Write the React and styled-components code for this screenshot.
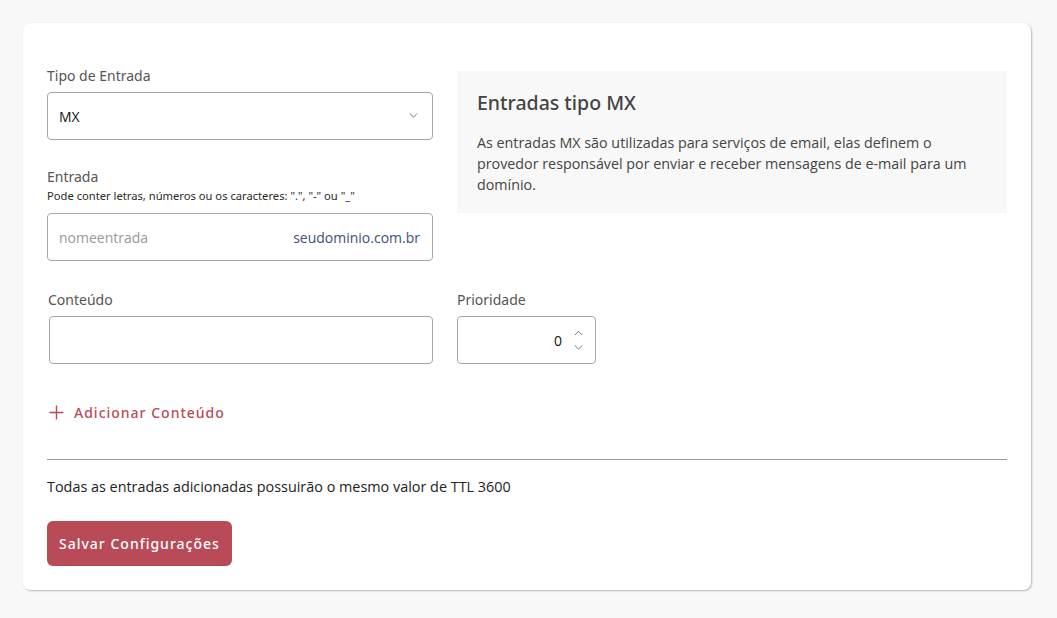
import React from "react";
import styled, { createGlobalStyle } from "styled-components";

const Global = createGlobalStyle`
  html, body { margin: 0; padding: 0; background: #f8f8f8; }
  body { font-family: "Open Sans", "Noto Sans", sans-serif; color: #222; }
  * { box-sizing: border-box; }
`;

const Page = styled.div`
  padding: 23px 26px 28px 23px;
`;

const Card = styled.div`
  background: #fff;
  border-radius: 8px;
  box-shadow: 1px 1px 2px rgba(0, 0, 0, 0.25);
  padding: 43px 24px 24px 24px;
`;

const Grid = styled.div`
  display: grid;
  grid-template-columns: 386px 1fr;
  column-gap: 24px;
  align-items: start;
`;

const Field = styled.div`
  display: flex;
  flex-direction: column;
  margin-top: ${(p) => p.$mt || 0}px;
`;

const Label = styled.label`
  font-family: "Noto Sans", "Open Sans", sans-serif;
  font-size: 14px;
  line-height: 20px;
  color: #555;
  margin-bottom: ${(p) => (p.$tight ? 1 : 6)}px;
  padding-left: ${(p) => p.$indent || 0}px;
`;

const Helper = styled.div`
  font-family: "Noto Sans", "Open Sans", sans-serif;
  font-size: 11.2px;
  line-height: 16px;
  color: #2a2a2a;
  margin-bottom: 9px;
`;

const Box = styled.div`
  height: 48px;
  border: 1px solid #a8a8a8;
  border-radius: 4px;
  display: flex;
  align-items: center;
  padding: 0 ${(p) => p.$pr || 12}px 0 11px;
  font-size: 14px;
  margin-left: ${(p) => p.$ml || 0}px;
  width: ${(p) => p.$w || "auto"};
  background: #fff;
`;

const Value = styled.span`
  flex: 1;
  color: #111;
  text-align: ${(p) => p.$align || "left"};
`;

const Placeholder = styled.span`
  flex: 1;
  color: #999;
  font-size: 14px;
`;

const Suffix = styled.span`
  color: #3f4f78;
  font-size: 14px;
`;

const Info = styled.div`
  background: #f8f8f8;
  margin-top: 5px;
  padding: 20px 26px 18px 20px;
`;

const InfoTitle = styled.h3`
  margin: 0 0 17px 0;
  font-family: "Noto Sans", "Open Sans", sans-serif;
  font-size: 19.5px;
  font-weight: 500;
  line-height: 24px;
  color: #444;
`;

const InfoText = styled.p`
  margin: 0;
  font-size: 14.3px;
  line-height: 21px;
  color: #444;
`;

const Stepper = styled.div`
  display: flex;
  flex-direction: column;
  gap: 9px;
  margin-left: 12px;
`;

const AddButton = styled.button`
  margin-top: 31px;
  margin-left: 2px;
  align-self: flex-start;
  background: none;
  border: none;
  padding: 8px 0;
  display: flex;
  align-items: center;
  gap: 10px;
  color: #b94a58;
  font-family: "Noto Sans", "Open Sans", sans-serif;
  font-size: 14px;
  font-weight: 500;
  letter-spacing: 1px;
  cursor: pointer;
`;

const Divider = styled.hr`
  margin: 29px 0 0 0;
  border: none;
  border-top: 1px solid #999;
`;

const Note = styled.p`
  margin: 17px 0 0 0;
  font-size: 14.4px;
  line-height: 20px;
  color: #222;
`;

const SaveButton = styled.button`
  margin-top: 24px;
  height: 45px;
  padding: 0 12px;
  background: #b94a58;
  color: #fff;
  border: none;
  border-radius: 6px;
  font-family: "Noto Sans", "Open Sans", sans-serif;
  font-size: 14px;
  font-weight: 500;
  letter-spacing: 1px;
  cursor: pointer;
`;

const Chevron = ({ up, size = 9 }) => (
  <svg width={size} height={size / 2 + 1} viewBox="0 0 10 6" fill="none" style={{ display: "block" }}>
    <path
      d={up ? "M1 5.5 L5 1.5 L9 5.5" : "M1 0.5 L5 4.5 L9 0.5"}
      stroke="#666"
      strokeWidth="1"
    />
  </svg>
);

const Plus = () => (
  <svg width="15" height="15" viewBox="0 0 15 15">
    <path d="M7.5 0.5 V14.5 M0.5 7.5 H14.5" stroke="#b94a58" strokeWidth="1.4" />
  </svg>
);

export default function App() {
  return (
    <Page>
      <Global />
      <Card>
        <Grid>
          <div>
            <Field>
              <Label>Tipo de Entrada</Label>
              <Box $pr={14}>
                <Value>MX</Value>
                <Chevron />
              </Box>
            </Field>
            <Field $mt={27}>
              <Label $tight>Entrada</Label>
              <Helper>Pode conter letras, números ou os caracteres: ".", "-" ou "_"</Helper>
              <Box>
                <Placeholder>nomeentrada</Placeholder>
                <Suffix>seudominio.com.br</Suffix>
              </Box>
            </Field>
          </div>
          <Info>
            <InfoTitle>Entradas tipo MX</InfoTitle>
            <InfoText>
              As entradas MX são utilizadas para serviços de email, elas definem o provedor
              responsável por enviar e receber mensagens de e-mail para um domínio.
            </InfoText>
          </Info>
          <Field $mt={29}>
            <Label $indent={1}>Conteúdo</Label>
            <Box $ml={2} />
          </Field>
          <Field $mt={29}>
            <Label>Prioridade</Label>
            <Box $w="139px" $pr={12}>
              <Value $align="right">0</Value>
              <Stepper>
                <Chevron up />
                <Chevron />
              </Stepper>
            </Box>
          </Field>
        </Grid>
        <Field>
          <AddButton>
            <Plus />
            Adicionar Conteúdo
          </AddButton>
        </Field>
        <Divider />
        <Note>Todas as entradas adicionadas possuirão o mesmo valor de TTL 3600</Note>
        <SaveButton>Salvar Configurações</SaveButton>
      </Card>
    </Page>
  );
}
